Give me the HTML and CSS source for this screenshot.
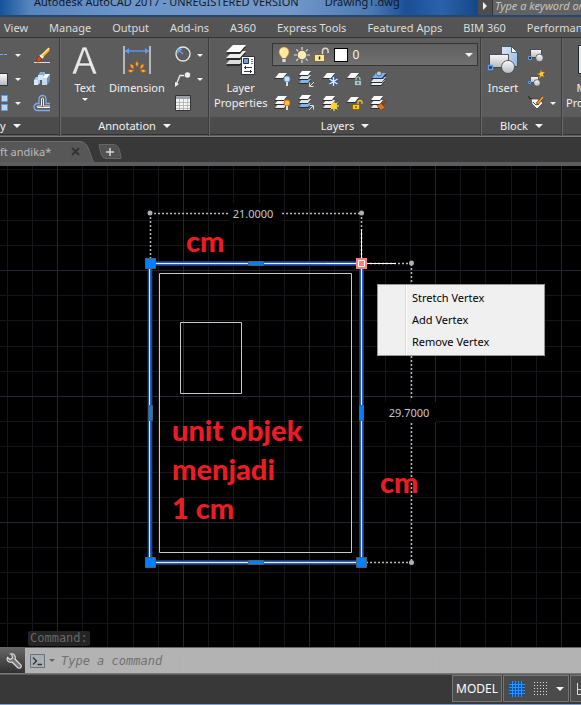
FILE: index.html
```html
<!DOCTYPE html>
<html lang="en">
<head>
<meta charset="utf-8">
<title>Autodesk AutoCAD 2017</title>
<link rel="stylesheet" href="styles.css">
</head>
<body>
<svg class="defs" aria-hidden="true">
  <defs>
    <linearGradient id="metal" x1="0" y1="0" x2="0" y2="1"><stop offset="0" stop-color="#fafafa"/><stop offset="1" stop-color="#b4b8c0"/></linearGradient>
    <linearGradient id="sky" x1="0" y1="0" x2="1" y2="1"><stop offset="0" stop-color="#dcebfa"/><stop offset="1" stop-color="#8fb6e0"/></linearGradient>
    <symbol id="sheets" viewBox="0 0 18 18">
      <path d="M4 11h9l-3 4H0z" fill="#2c2c2c"/><path d="M4 10h9l-3 4H1z" fill="#e6e6e6"/>
      <path d="M4 7h9l-3 4H0z" fill="#2c2c2c"/><path d="M4 6h9l-3 4H1z" fill="#f4f4f4"/>
      <path d="M4 3h9l-3 4H0z" fill="#2c2c2c"/><path d="M4 2h9l-3 4H1z" fill="#fff"/>
    </symbol>
    <symbol id="sheets-blue" viewBox="0 0 18 18">
      <path d="M4 10h9l-3 4H0z" fill="#2c2c2c"/><path d="M4 9h9l-3 4H1z" fill="#80b2f2"/>
      <path d="M4 6h9l-3 4H0z" fill="#2c2c2c"/><path d="M4 5h9l-3 4H1z" fill="#dde4ec"/>
      <path d="M4 2h9l-3 4H0z" fill="#2c2c2c"/><path d="M4 1h9l-3 4H1z" fill="#fff"/>
    </symbol>
    <symbol id="sheet" viewBox="0 0 18 18"><path d="M5 4h8l-4 5H0z" fill="#2c2c2c"/><path d="M5 3h8l-4 5H1z" fill="#f8f8f8"/></symbol>
  </defs>
</svg>

<header class="titlebar">
  <span class="app-title">Autodesk AutoCAD 2017 - UNREGISTERED VERSION</span>
  <span class="file-title">Drawing1.dwg</span>
  <div class="search">
    <button class="search-toggle" aria-label="Collapse search"><i class="caret caret-right"></i></button>
    <input class="search-input" type="text" placeholder="Type a keyword or phrase" aria-label="Search">
  </div>
</header>

<nav class="menu">
  <a href="#">View</a><a href="#">Manage</a><a href="#">Output</a><a href="#">Add-ins</a><a href="#">A360</a><a href="#">Express Tools</a><a href="#">Featured Apps</a><a href="#">BIM 360</a><a href="#">Performance</a>
</nav>

<section class="ribbon">
  <div class="panel panel-modify">
    <div class="panel-body">
      <div class="stack stack-edge">
        <button aria-label="Trim"><svg width="8" height="18"><path d="M0 8.500h8" stroke="#6fa8f5" stroke-dasharray="3 1"/></svg><i class="caret"></i></button>
        <button aria-label="Fillet"><svg width="8" height="18"><path d="M-6 3.500H7.500v12H-6z" fill="url(#metal)" stroke="#333"/></svg><i class="caret"></i></button>
        <button aria-label="Array"><svg width="8" height="18"><path d="M1.500 1.500h6v6h-6zM1.500 10.500h6v6h-6z" fill="#b8d6fa" stroke="#5b98ea"/></svg><i class="caret"></i></button>
      </div>
      <div class="stack">
        <button aria-label="Erase"><svg width="18" height="18"><path d="M1 16.500h16" stroke="#ddd"/><path d="M17 1v4l-8 8-3-3z" fill="#f5a52c" stroke="#70400c" stroke-width=".7"/><path d="M16 2 8 10" stroke="#ffe9a8" stroke-width="1.500"/><path d="M8 8.500 11 11l-2 2-3-3z" fill="#eee"/><path d="M6 10l3 3c-1 3-5 3-5 3s-1-4 2-6z" fill="#d64e12" stroke="#6a2408" stroke-width=".6"/></svg></button>
        <button aria-label="Explode"><svg width="18" height="18"><path d="M1 10l2-3h4v6l-2 2H1z" fill="#a9cdf4"/><path d="M1 10h4v5H1z" fill="#d9e8f8"/><path d="M5 6l2-4h5v5l-2 3H5z" fill="#84aee0"/><path d="M5 5h5v5H5z" fill="#d6e6f6"/><path d="M9 8l3-4h5v7l-3 4H9z" fill="#6b8fbd"/><path d="M9 8h5v7H9z" fill="#c3d9f1"/><path d="M9 8l3-4h5l-3 4z" fill="#fff"/></svg></button>
        <button aria-label="Offset"><svg width="18" height="18" fill="none"><path d="M17 16.500H4.500a3.500 3.500 0 0 1 0-7H6V5a3.500 3.500 0 0 1 7 0v4.500h4" stroke="#78adf5" stroke-width="1.300"/><path d="M17 13.500H4.500a1 1 0 0 1 0-1.500H8.500V5a1 1 0 0 1 2 0v7H17" stroke="#eee"/></svg></button>
      </div>
    </div>
    <button class="panel-title">y <i class="caret caret-big"></i></button>
  </div>

  <div class="panel panel-annotation">
    <div class="panel-body">
      <button class="tool"><svg width="30" height="34"><path d="M2 31 12.500 4h4L27 31h-4l-3-8H9l-3 8zM10 20h9L14.500 7.500z" fill="#e8e8e8" fill-rule="evenodd" stroke="#444" stroke-width=".5"/></svg><span>Text</span><i class="caret"></i></button>
      <button class="tool"><svg width="30" height="34"><path d="M2 3v28M28 3v28" stroke="#e8e8e8" stroke-width="1.300"/><path d="M3 8h24" stroke="#5b9cf8" stroke-width="1.300"/><path d="M3 8l4-3v6zM27 8l-4-3v6z" fill="#5b9cf8"/><g fill="#ffb62a" stroke="#c4560a" stroke-width=".6"><path d="M15 18l1.500 3-1.500 3-1.500-3zM8 21l3 1 1 4-3-1.500zM22 21l-3 1-1 4 3-1.500zM5.500 28l3-1.500 3.500 1-3 2zM24.500 28l-3-1.500-3.500 1 3 2z"/></g></svg><span>Dimension</span></button>
      <div class="stack">
        <button aria-label="Circle dimension"><svg width="18" height="18" fill="none"><circle cx="9" cy="8" r="7" stroke="#e4e4e4" stroke-width="1.400"/><path d="M9 8 4.500 4M4 7.500V3.500h4" stroke="#64a4fa" stroke-width="1.300"/></svg><i class="caret"></i></button>
        <button aria-label="Leader"><svg width="18" height="18"><path d="M2 15 6 5.500h5" fill="none" stroke="#eee" stroke-width="1.300"/><path d="M1 17v-5l4 2z" fill="#eee"/><circle cx="13.500" cy="5" r="3.200" fill="#eee" stroke="#333" stroke-width=".6"/></svg><i class="caret"></i></button>
        <button aria-label="Table"><svg width="18" height="18"><path d="M1.500 1.500h15v15h-15z" fill="#f3f3f3" stroke="#333"/><path d="M2 2h14v3H2z" fill="#9a9fa8"/><path d="M2 8.500h14M2 11.500h14M2 14.500h14M5.500 5v11M9.500 5v11M13.500 5v11" stroke="#a4a4a4" stroke-width=".7"/></svg></button>
      </div>
    </div>
    <button class="panel-title">Annotation <i class="caret caret-big"></i></button>
  </div>

  <div class="panel panel-layers">
    <div class="panel-body">
      <button class="tool"><svg width="32" height="34"><path d="M8 15h13l-6 8H1z" fill="#2c2c2c"/><path d="M8 13h13l-6 8H1z" fill="#dcdcdc"/><path d="M8 10h13l-6 7H1z" fill="#2c2c2c"/><path d="M8 8h13l-6 7H1z" fill="#ececec"/><path d="M8 4h13l-6 7H1z" fill="#2c2c2c"/><path d="M8 2h13l-6 7H1z" fill="#fff"/><path d="M16.500 13.500h13v18h-13z" fill="#fff" stroke="#333"/><path d="M18.500 15.500h5v5h-5z" fill="#6d9dd8" stroke="#234"/><path d="M26 16.500h2M26 18.500h2M26 20.500h2" stroke="#777"/><path d="M19 24.500h8M19 28.500h8" stroke="#345"/><path d="M20.500 23v3M25.500 27v3" stroke="#234"/></svg><span>Layer<br>Properties</span></button>
      <div class="layer-tools">
        <div class="layer-combo">
          <svg width="14" height="18"><path d="M7 1a5 5 0 0 0-5 5c0 3 2.500 4 3 6.500h4C9.500 10 12 9 12 6a5 5 0 0 0-5-5z" fill="#ffe89c" stroke="#a58036" stroke-width=".6"/><path d="M5 12.500h4v3l-1 1H6l-1-1z" fill="#ddd" stroke="#444" stroke-width=".5"/><path d="M5 3.500q-1 1-1 3" fill="none" stroke="#fff"/></svg>
          <svg width="18" height="18"><path d="M9 1v3M9 14v3M1 9h3M14 9h3M3.300 3.300l2 2M12.700 12.700l2 2M3.300 14.700l2-2M12.700 5.300l2-2" stroke="#ddd" stroke-width="1.200"/><circle cx="9" cy="9" r="4.300" fill="#ffeab0"/></svg>
          <svg width="18" height="18"><path d="M9.500 9V5a2.800 2.800 0 0 1 5.600 0v2" fill="none" stroke="#dcd9c8" stroke-width="1.500"/><path d="M1.500 8.500h10v7h-10z" fill="#ffe69a" stroke="#5a4a20" stroke-width=".7"/><path d="M6.500 10.500v3" stroke="#222" stroke-width="1.500"/></svg>
          <i class="swatch"></i>
          <select aria-label="Layer"><option>0</option></select>
          <i class="caret caret-big"></i>
        </div>
        <div class="icon-grid">
          <button aria-label="Off"><svg width="18" height="18"><use href="#sheet"/><circle cx="13" cy="9" r="3" fill="#c8e3ff" stroke="#5a9df0"/><path d="M13 12v4" stroke="#ddd" stroke-width="2"/></svg></button>
          <button aria-label="Isolate"><svg width="18" height="18"><use href="#sheets-blue"/><path d="M16 12l-4 4M11.500 12.500v4h4" fill="none" stroke="#ddd"/></svg></button>
          <button aria-label="Freeze"><svg width="18" height="18"><use href="#sheet"/><circle cx="11.500" cy="11.500" r="4.500" fill="#315796"/><path d="M11.500 7v9M7.500 9l8 5M7.500 14l8-5" stroke="#dcefff" stroke-width="1.400"/></svg></button>
          <button aria-label="Lock"><svg width="18" height="18"><use href="#sheet"/><path d="M10 11V9a2 2 0 0 1 4 0v2" fill="none" stroke="#aac5c5" stroke-width="1.200"/><path d="M8.500 10.500h7v5h-7z" fill="#a5c0bf" stroke="#3c5656" stroke-width=".6"/><path d="M12 12v2" stroke="#243838"/></svg></button>
          <button aria-label="Make current"><svg width="18" height="18"><path d="M4 11h11l-4 5H0z" fill="#2c2c2c"/><path d="M4 10h11l-4 5H1z" fill="#eee"/><path d="M4 8h12l-4 5H0z" fill="#2c2c2c"/><path d="M5 7h11l-4 5H1z" fill="#dfe5ec"/><path d="M5 4h12l-4 5H1z" fill="#1f3350"/><path d="M6 3h10l-4 5H2z" fill="#79b2f4"/><circle cx="9" cy="3.500" r="2.500" fill="#b9c5d2" stroke="#345" stroke-width=".6"/></svg></button>
          <button aria-label="Turn on"><svg width="18" height="18"><use href="#sheets"/><circle cx="13" cy="9" r="3" fill="#ffc043" stroke="#df6d0a"/><path d="M13 12v4" stroke="#ddd" stroke-width="2"/></svg></button>
          <button aria-label="Unisolate"><svg width="18" height="18"><use href="#sheets-blue"/><path d="M11 16l4-4M11.500 11.500h4v4" fill="none" stroke="#ddd"/></svg></button>
          <button aria-label="Thaw"><svg width="18" height="18"><use href="#sheets"/><path d="M12 7v10M7 12h10M8.500 8.500l7 7M8.500 15.500l7-7" stroke="#ffe58a"/><circle cx="12" cy="12" r="3.200" fill="#ffd420"/></svg></button>
          <button aria-label="Unlock"><svg width="18" height="18"><use href="#sheet"/><path d="M12 12V8.500a2 2 0 0 1 4 0V10" fill="none" stroke="#ffc02c" stroke-width="1.300"/><path d="M6.500 10.500h7v5h-7z" fill="#ffc91c" stroke="#694400" stroke-width=".6"/><path d="M10 12v2" stroke="#432c00"/></svg></button>
          <button aria-label="Match layer"><svg width="18" height="18"><use href="#sheets"/><path d="M16.500 6.500 12 11" stroke="#8a3f10" stroke-width="1.800"/><path d="M7 11.500l4-2 4 4-4 3z" fill="#d97828" stroke="#703008" stroke-width=".6"/></svg></button>
        </div>
      </div>
    </div>
    <button class="panel-title">Layers <i class="caret caret-big"></i></button>
  </div>

  <div class="panel panel-block">
    <div class="panel-body">
      <button class="tool"><svg width="32" height="34"><path d="M14.500 3.500h10l6 6v14h-16z" fill="url(#sky)" stroke="#345" stroke-width=".8"/><path d="M24.500 3.500v6h6z" fill="#fff" stroke="#345" stroke-width=".8"/><path d="M2.500 11.500h19v13h-19z" fill="url(#metal)" stroke="#333" stroke-width=".8"/><circle cx="21" cy="24" r="6.500" fill="url(#metal)" stroke="#444" stroke-width=".8"/><path d="M1.500 22.500h4v4h-4z" fill="#333" stroke="#5a9df8" stroke-width="1.300"/></svg><span>Insert</span></button>
      <div class="stack">
        <button aria-label="Create"><svg width="18" height="18"><path d="M3.500 3.500h11v8h-11z" fill="url(#metal)" stroke="#333" stroke-width=".8"/><circle cx="12.500" cy="12" r="3.800" fill="url(#metal)" stroke="#444" stroke-width=".7"/><path d="M1.500 10.500h3v3h-3z" fill="#333" stroke="#5a9df8"/></svg></button>
        <button aria-label="Edit"><svg width="18" height="18"><path d="M3.500 6.500h8v6h-8z" fill="url(#metal)" stroke="#333" stroke-width=".7"/><circle cx="10" cy="13" r="3.300" fill="url(#metal)" stroke="#444" stroke-width=".7"/><path d="M1.500 11.500h2v2h-2z" fill="#333" stroke="#5a9df8"/><path d="M14 0l-1 3-3 1 3 1-1 4 2.500-3 2.500 1-1-3 2-2h-3z" fill="#ffcc38" stroke="#b56c08" stroke-width=".5"/></svg></button>
        <button aria-label="Edit attributes"><svg width="18" height="18"><path d="M1.500 2q0 3 4 3" fill="none" stroke="#222"/><path d="M4 5h7l5 4-6 6-5-5z" fill="#f5f5f5" stroke="#333" stroke-width=".7"/><path d="M6 8l3 3 3-1" fill="none" stroke="#444"/><path d="M16 3l-6 7" stroke="#6a3a08" stroke-width="3"/><path d="M16 3l-5.500 6.500" stroke="#f5a03a" stroke-width="1.800"/></svg><i class="caret"></i></button>
      </div>
    </div>
    <button class="panel-title">Block <i class="caret caret-big"></i></button>
  </div>

  <div class="panel panel-props">
    <div class="panel-body">
      <button class="tool"><svg width="32" height="34"><path d="M1.500 2.500h29v28h-29z" fill="#dfe9f4" stroke="#222"/><path d="M4 6h24v4H4z" fill="#9cbbe0"/></svg><span>Match<br>Properties</span></button>
    </div>
    <div class="panel-title"></div>
  </div>
</section>

<div class="doc-tabs">
  <div class="doc-tab">
    <svg class="tab-shape" width="100" height="25"><path d="M0 .5h80C92 .5 89 24.500 99 24.500H0z" fill="#575757"/><path d="M0 .5h80C92 .5 89 24.500 99 24.500" fill="none" stroke="#6c6c6c"/></svg>
    <span>ft andika*</span>
    <button aria-label="Close drawing"><svg width="9" height="9"><path d="M1 1l7 7M8 1 1 8" stroke="#333" stroke-width="1.800"/></svg></button>
  </div>
  <button class="new-tab" aria-label="New drawing"><svg width="24" height="15"><path d="M1 .5h14c5 0 7 4 8 14H8C3 14.500 2 6 1 .5z" fill="#525252" stroke="#666"/><path d="M12 4v8M8 8h8" stroke="#d8d8d8" stroke-width="1.500"/></svg></button>
</div>

<main class="workspace">
  <svg class="drawing" width="100%" height="100%">
    <defs>
      <pattern id="grid" x="57" y="104" width="126" height="126" patternUnits="userSpaceOnUse">
        <path d="M25.500 0v126M50.500 0v126M76.500 0v126M101.500 0v126M0 25.500h126M0 50.500h126M0 76.500h126M0 101.500h126" stroke="#15161c"/>
        <path d="M.5 0v126M0 .5h126" stroke="#242630"/>
      </pattern>
    </defs>
    <rect width="100%" height="100%" fill="url(#grid)"/>

    <g fill="none" stroke="#c8c8c8">
      <path d="M159.500 107.500h192v279h-192zM180.500 156.500h61v71h-61z"/>
    </g>

    <g fill="none">
      <path d="M150 97.500h211.500v299H150z" stroke="#17397f" stroke-width="5"/>
      <path d="M150 97.500h211.500v299H150z" stroke="#2c5bb5" stroke-width="3"/>
      <path d="M149.500 97.500h212v299h-212z" stroke="#e4ecff"/>
    </g>

    <g fill="none" stroke="#b8b8b8" stroke-width="1.500" stroke-dasharray="2 2">
      <path d="M150.500 47V98M150 47.500h78M282 47.500h80M361.500 47v51M362 97.500h50M411.500 98v136M411.500 257v139M366 396.500h45"/>
    </g>
    <g fill="#b0b0b0"><circle cx="150" cy="47" r="2.500"/><circle cx="361.500" cy="47" r="2.500"/><circle cx="411.500" cy="97" r="2.500"/><circle cx="411.500" cy="396.500" r="2.500"/></g>
    <path d="M361.500 63v68M327 97.500h69" stroke="#fff"/>

    <g fill="#0080ff" stroke="#52606c">
      <path d="M145.500 92.500h10v10h-10zM145.500 391.500h10v10h-10zM356.500 391.500h10v10h-10z"/>
      <path d="M248.500 95.500h15v4h-15zM248.500 394.500h15v4h-15zM148.500 239.500h4v15h-4zM359.500 239.500h4v15h-4z"/>
    </g>
    <path d="M356 92h11v11h-11z" fill="#ff7f7f"/>
    <path d="M358.500 94.500h6v6h-6z" fill="#ff7f7f" stroke="#fff"/>

    <rect x="229" y="37" width="53" height="20"/>
    <rect x="385" y="236" width="51" height="20"/>
    <text class="dim" x="253" y="52">21.0000</text>
    <text class="dim" x="409" y="251">29.7000</text>

    <g class="note">
      <text x="186" y="86">cm</text>
      <text x="380" y="327">cm</text>
      <text x="172" y="275">unit objek</text>
      <text x="172" y="314">menjadi</text>
      <text x="172" y="353">1 cm</text>
    </g>
  </svg>

  <div class="context-menu" role="menu">
    <button role="menuitem">Stretch Vertex</button>
    <button role="menuitem">Add Vertex</button>
    <button role="menuitem">Remove Vertex</button>
  </div>

  <div class="history">Command:</div>
  <div class="command-line">
    <button class="wrench" aria-label="Customize"><svg width="16" height="16"><path d="M1.500 4.500 4 6.500 6.500 5 6 2 4.500 1C8 0 10 3 9 6l6 6c1 2-1 4-3 3L6 9C3 10 0 8 1.500 4.500z" fill="#777" stroke="#e0e0e0" stroke-width="1.100"/></svg></button>
    <label class="prompt" for="command"><svg width="15" height="14"><path d="M.5.5h14v13H.5z" fill="#a9afb4" stroke="#68737c"/><path d="M3 3.500 6.500 7 3 10.500M7.500 10.500H12" fill="none" stroke="#333" stroke-width="1.300"/></svg><i class="caret caret-dark"></i></label>
    <input id="command" type="text" placeholder="Type a command">
  </div>
</main>

<footer class="statusbar">
  <button class="model">MODEL</button>
  <button class="grid-toggle" aria-label="Grid and snap"><svg width="16" height="16"><path d="M1 1h14v14H1z" fill="#0b4ea2"/><path d="M3.500 0v16M6.500 0v16M9.500 0v16M12.500 0v16M0 3.500h16M0 6.500h16M0 9.500h16M0 12.500h16" stroke="#2795ff"/></svg><svg width="15" height="15"><path d="M1 1.500h14M1 4.500h14M1 7.500h14M1 10.500h14M1 13.500h14" stroke="#ddd" stroke-dasharray="1 2"/></svg><i class="caret caret-big"></i></button>
  <button class="ortho" aria-label="Ortho"><svg width="16" height="16"><path d="M2.500 2v11.500H16M2.500 8.500h5v5" fill="none" stroke="#ddd"/></svg></button>
</footer>
</body>
</html>
```
FILE: styles.css
```css
* { box-sizing: border-box; }
html, body { margin: 0; height: 100%; }
body {
  display: flex;
  flex-direction: column;
  overflow: hidden;
  background: #383838;
  color: #f2f2f2;
  font: 12px/15px "Noto Sans", "Open Sans", sans-serif;
}
button, input, select {
  margin: 0; padding: 0; border: 0;
  background: none; color: inherit; font: inherit;
  border-radius: 0;
}
button { display: flex; align-items: center; }
svg { display: block; flex: none; }
.defs { position: absolute; width: 0; height: 0; }

.caret {
  flex: none;
  width: 0; height: 0;
  border: 3px solid transparent;
  border-top-color: #f2f2f2;
  border-bottom: 0;
}
.caret-big { border-width: 4px 4px 0; }
.caret-right { border: 4px solid transparent; border-left-color: #f2f2f2; border-right: 0; }
.caret-dark { border-top-color: #666; }

.titlebar {
  flex: none;
  display: flex;
  height: 17px;
  padding-left: 34px;
  overflow: hidden;
  white-space: nowrap;
  color: #101828;
  font-size: 11px;
  line-height: 4px;
  background: linear-gradient(90deg, #13539c 0, #5684bd 5%, #6b95c9 20%, #7498c9 50%, #4a78b4 64%, #1b4f96 70%, #2a62a9 76%, #164889 82%);
  border-bottom: 2px solid #26456f;
}
.file-title { margin-left: 26px; }
.search { display: flex; margin-left: auto; width: 103px; flex: none; background: #4d4d4d; }
.search-toggle { width: 14px; height: 11px; justify-content: center; }
.search-input {
  flex: 1; min-width: 0; height: 15px; padding: 0 0 4px 2px;
  background: #626262; border-left: 1px solid #333;
  font-style: italic; font-size: 11px; line-height: 11px;
}
.search-input::placeholder { color: #c4c4c4; opacity: 1; }

.menu {
  flex: none;
  display: flex;
  gap: 21px;
  height: 21px;
  padding: 3px 4px 0;
  background: #545454;
  border-bottom: 1px solid #333;
  white-space: nowrap;
  overflow: hidden;
  font-size: 11px;
}
.menu a { color: #dcdcdc; text-decoration: none; }

.ribbon {
  flex: none;
  display: flex;
  height: 99px;
  background: #5c5c5c;
  border-bottom: 1px solid #7c7c7c;
  overflow: hidden;
  font-size: 11px;
}
.panel { display: flex; flex-direction: column; flex: none; border-right: 1px solid #3c3c3c; border-left: 1px solid #686868; }
.panel-body { display: flex; height: 79px; padding-top: 5px; }
.panel-title {
  height: 18px; justify-content: center; gap: 7px;
  background: #4b4b4b; border-bottom: 1px solid #333;
  width: 100%;
}
.panel-modify { width: 60px; border-left: 0; }
.panel-modify .panel-title { justify-content: flex-start; }
.panel-modify .panel-body { gap: 12px; }
.panel-annotation { width: 149px; }
.panel-annotation .panel-body { gap: 9px; padding-left: 9px; }
.panel-layers { width: 272px; }
.panel-layers .panel-body { gap: 5px; padding-left: 4px; }
.panel-block { width: 81px; }
.panel-block .panel-body { gap: 8px; padding-left: 5px; }
.panel-props { width: 64px; }
.panel-props .panel-body { padding-left: 3px; }

.stack { display: flex; flex-direction: column; gap: 6px; padding-top: 3px; }
.stack button { height: 18px; gap: 5px; }
.stack-edge button { gap: 7px; }
.tool { flex-direction: column; align-items: center; height: 74px; text-align: center; line-height: 15px; }
.tool span { margin-top: 3px; }
.tool .caret { margin-top: 3px; }

.layer-tools { flex: 1; padding-right: 2px; }
.layer-combo {
  display: flex; align-items: center; gap: 2px;
  height: 23px; padding: 0 4px;
  background: linear-gradient(#606060, #707070);
  border: 1px solid #363636;
}
.swatch { width: 14px; height: 14px; margin-left: 1px; background: #fff; border: 1px solid #000; }
.layer-combo select { flex: 1; appearance: none; padding-left: 2px; font-size: 12px; }
.icon-grid { display: grid; grid-template-columns: repeat(5, 18px); gap: 6px; padding: 4px 2px; }
.icon-grid button { height: 18px; }

.doc-tabs { flex: none; display: flex; height: 29px; padding-top: 3px; background: #383838; border-top: 1px solid #333; border-bottom: 4px solid #5c5c5c; font-size: 11px; overflow: hidden; }
.doc-tab { position: relative; display: flex; align-items: center; width: 98px; color: #bcbcbc; }
.doc-tab > span, .doc-tab > button { position: relative; }
.doc-tab > button { margin-left: auto; margin-right: 18px; }
.tab-shape { position: absolute; left: 0; top: 0; }

.workspace { position: relative; flex: 1; min-height: 0; display: flex; flex-direction: column; justify-content: flex-end; background: #000; }
.drawing { position: absolute; inset: 0; }
.dim { fill: #c4c8d4; font: 11px "Noto Sans", sans-serif; text-anchor: middle; }
.note { fill: #ed1c24; font: 900 29px "Lato", sans-serif; }

.context-menu {
  position: absolute; left: 377px; top: 118px;
  width: 168px; padding: 1px 2px 3px;
  background: linear-gradient(90deg, #f0f0f0 27px, #d8d8d8 27px, #d8d8d8 28px, #fff 28px, #fff 29px, #f0f0f0 29px);
  border: 1px solid #979797;
  color: #000;
}
.context-menu button { width: 100%; height: 22px; padding-left: 32px; font-size: 11px; }

.history {
  position: relative; align-self: flex-start;
  margin-left: 28px; padding: 0 2px;
  background: #242424; color: #686868; border-radius: 2px;
  font: 12px/15px "DejaVu Sans Mono", monospace;
}
.command-line {
  position: relative; display: flex; align-items: center;
  height: 27px; margin-top: 1px;
  background: rgba(190, 190, 190, .94);
  border-top: 1px solid #666; border-bottom: 1px solid #777;
}
.wrench { width: 25px; height: 25px; padding-left: 6px; background: linear-gradient(#666, #303030); }
.prompt { display: flex; align-items: center; gap: 4px; margin-left: 5px; }
.command-line input { flex: 1; min-width: 0; height: 24px; padding-left: 6px; color: #333; font: italic 12px "DejaVu Sans Mono", monospace; }
.command-line input::placeholder { color: #707070; opacity: 1; }

.statusbar {
  flex: none; display: flex; justify-content: flex-end; gap: 1px;
  height: 31px; padding-bottom: 2px;
  background: #383838;
  border-top: 1px solid #5c5c5c; border-bottom: 1px solid #7ca0d4;
  overflow: hidden;
}
.statusbar button { height: 27px; justify-content: center; background: #4b4b4b; border: 1px solid #777; flex: none; }
.statusbar .model { width: 50px; color: #fff; font-size: 12px; }
.statusbar .grid-toggle { width: 66px; gap: 8px; }
.statusbar .ortho { width: 28px; margin-right: -17px; justify-content: flex-start; padding-left: 4px; }
```
